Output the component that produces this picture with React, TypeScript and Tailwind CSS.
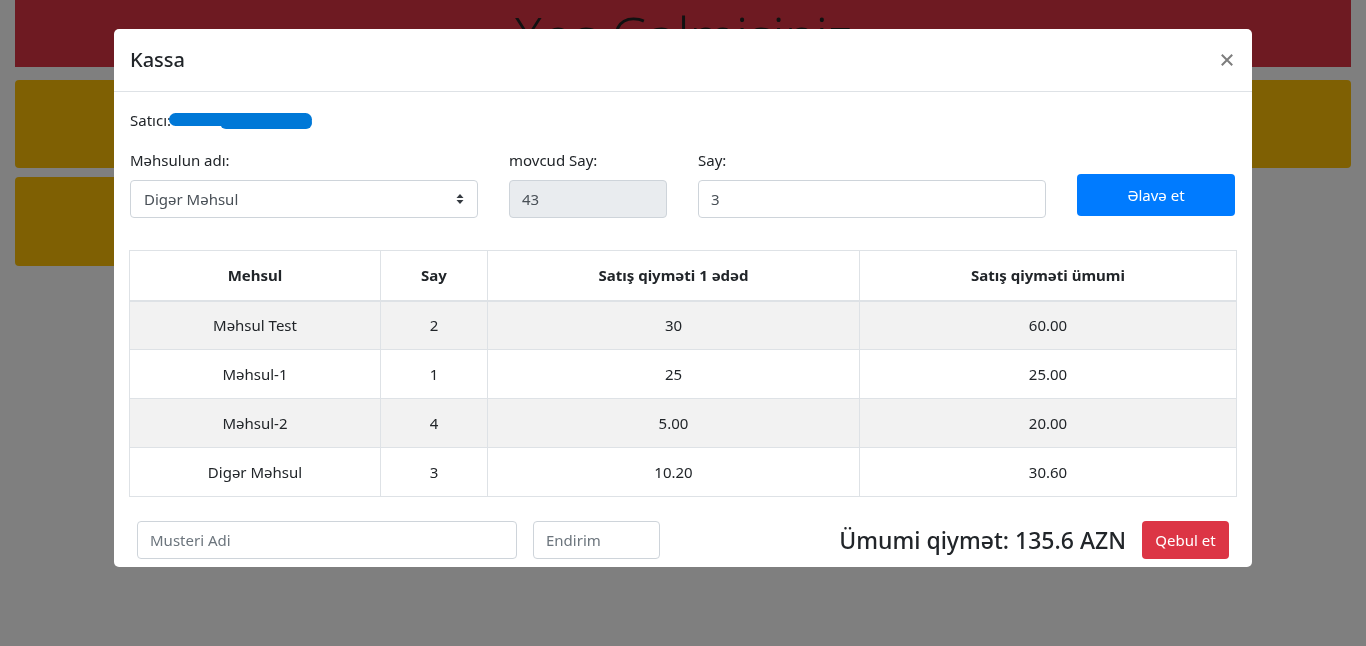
import React from "react";

const ROWS = [
  { name: "Məhsul Test", say: "2", unit: "30", total: "60.00" },
  { name: "Məhsul-1", say: "1", unit: "25", total: "25.00" },
  { name: "Məhsul-2", say: "4", unit: "5.00", total: "20.00" },
  { name: "Digər Məhsul", say: "3", unit: "10.20", total: "30.60" },
];

function SelectArrows() {
  return (
    <svg width="8" height="12" viewBox="0 0 8 12" className="shrink-0">
      <path d="M4 1 L7.5 5 H0.5 Z" fill="#343a40" />
      <path d="M4 11 L7.5 7 H0.5 Z" fill="#343a40" />
    </svg>
  );
}

function CloseIcon() {
  return (
    <svg width="12" height="12" viewBox="0 0 12 12">
      <path d="M1.5 1.5 L10.5 10.5 M10.5 1.5 L1.5 10.5" stroke="#7d7d7d" strokeWidth="2" strokeLinecap="square" />
    </svg>
  );
}

export default function App() {
  return (
    <div
      className="relative min-h-[646px] bg-white text-[#212529]"
      style={{ fontFamily: '"Noto Sans", "Open Sans", Arial, sans-serif' }}
    >
      {/* Page behind the modal */}
      <div className="px-[15px]">
        <div className="flex h-[67px] items-start justify-center overflow-hidden bg-[#dc3545]">
          <h1 className="mt-[4px] text-[52px] font-light leading-[1.2] text-[#222]">Xoş Gəlmisiniz</h1>
        </div>
        <div className="mt-[13px] flex gap-6">
          <div className="flex w-[420px] flex-col gap-[9px]">
            <div className="h-[88px] rounded bg-[#ffc107]" />
            <div className="h-[89px] rounded bg-[#ffc107]" />
          </div>
          <div className="h-[88px] flex-1 rounded bg-[#ffc107]" />
        </div>
      </div>

      {/* Backdrop */}
      <div className="fixed inset-0 bg-black/50" />

      {/* Modal */}
      <div className="fixed inset-0 flex justify-center">
        <div className="mt-[29px] h-[538px] w-[1138px] overflow-hidden rounded-[5px] bg-white">
          <div className="flex items-center justify-between border-b border-[#dee2e6] px-4 pb-4 pt-4">
            <h5 className="text-[20px] font-medium leading-[30px]">Kassa</h5>
            <span className="mr-[3px]">
              <CloseIcon />
            </span>
          </div>

          <div className="px-4 pt-4">
            <div className="relative flex h-6 items-center text-[15px]">
              <span>Satıcı:</span>
              <span className="absolute left-[39px] top-[5px] h-[13px] w-[143px] rounded-full bg-[#0078d7]" />
              <span className="absolute left-[90px] top-[9px] h-[12px] w-[92px] rounded-full bg-[#0078d7]" />
            </div>

            <div className="mt-4 grid grid-cols-[348px_158px_348px_158px] gap-x-[31px]">
              <div>
                <label className="block text-[15px] leading-6">Məhsulun adı:</label>
                <div className="mt-2 flex h-[38px] items-center justify-between rounded border border-[#ced4da] pl-[13px] pr-[13px] text-[15px] text-[#495057]">
                  <span>Digər Məhsul</span>
                  <SelectArrows />
                </div>
              </div>
              <div>
                <label className="block text-[15px] leading-6">movcud Say:</label>
                <div className="mt-2 flex h-[38px] items-center rounded border border-[#ced4da] bg-[#e9ecef] px-3 text-[15px] text-[#495057]">
                  43
                </div>
              </div>
              <div>
                <label className="block text-[15px] leading-6">Say:</label>
                <div className="mt-2 flex h-[38px] items-center rounded border border-[#ced4da] px-3 text-[15px] text-[#495057]">
                  3
                </div>
              </div>
              <div className="pt-[26px]">
                <button className="h-[42px] w-full rounded bg-[#007bff] text-[15px] text-white">Əlavə et</button>
              </div>
            </div>

            <table className="-mx-px mt-8 w-[calc(100%+2px)] table-fixed border-collapse text-center text-[15px]">
              <colgroup>
                <col className="w-[251px]" />
                <col className="w-[107px]" />
                <col className="w-[372px]" />
                <col />
              </colgroup>
              <thead>
                <tr className="h-[50px]">
                  <th className="border border-b-2 border-[#dee2e6] font-bold">Mehsul</th>
                  <th className="border border-b-2 border-[#dee2e6] font-bold">Say</th>
                  <th className="border border-b-2 border-[#dee2e6] font-bold">Satış qiyməti 1 ədəd</th>
                  <th className="border border-b-2 border-[#dee2e6] font-bold">Satış qiyməti ümumi</th>
                </tr>
              </thead>
              <tbody>
                {ROWS.map((r, i) => (
                  <tr key={r.name} className={`h-[49px] ${i % 2 === 0 ? "bg-[#f2f2f2]" : "bg-white"}`}>
                    <td className="border border-[#dee2e6]">{r.name}</td>
                    <td className="border border-[#dee2e6]">{r.say}</td>
                    <td className="border border-[#dee2e6]">{r.unit}</td>
                    <td className="border border-[#dee2e6]">{r.total}</td>
                  </tr>
                ))}
              </tbody>
            </table>

            <div className="mt-[24px] flex items-center px-[7px]">
              <div className="flex h-[38px] w-[380px] items-center rounded border border-[#ced4da] px-3 text-[15px] text-[#6c757d]">
                Musteri Adi
              </div>
              <div className="ml-[16px] flex h-[38px] w-[127px] items-center rounded border border-[#ced4da] px-3 text-[15px] text-[#6c757d]">
                Endirim
              </div>
              <div className="ml-auto text-[23px] font-medium leading-none">Ümumi qiymət: 135.6 AZN</div>
              <button className="ml-[16px] h-[38px] w-[87px] rounded bg-[#dc3545] text-[15px] text-white">Qebul et</button>
            </div>
          </div>
        </div>
      </div>
    </div>
  );
}
